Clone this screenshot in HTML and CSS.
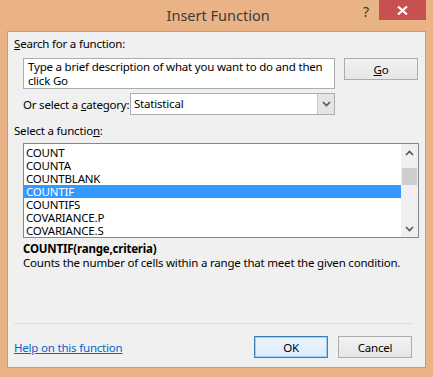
FILE: index.html
```html
<!DOCTYPE html>
<html lang="en">
<head>
    <meta charset="UTF-8">
    <title>Insert Function</title>
    <link rel="stylesheet" href="styles.css">
</head>
<body>
    <div class="janela">
        <div class="titulo">
            <span class="titulo-texto">Insert Function</span>
            <span class="ajuda">?</span>
            <span class="fechar">
                <svg width="11" height="9" viewBox="0 0 11 9"><path d="M1 0.5 L10 8.5 M10 0.5 L1 8.5" stroke="#fff" stroke-width="2.2"/></svg>
            </span>
        </div>

        <div class="cliente">
            <div class="rotulo"><u>S</u>earch for a function:</div>
            <div class="linha-busca">
                <div class="caixa-busca">Type a brief description of what you want to do and then click Go</div>
                <button class="botao"><u>G</u>o</button>
            </div>

            <div class="linha-categoria">
                <span class="rotulo-categoria">Or select a <u>c</u>ategory:</span>
                <div class="combo">
                    <span class="combo-valor">Statistical</span>
                    <span class="combo-seta">
                        <svg width="9" height="6" viewBox="0 0 9 6"><path d="M1 1 L4.5 4.5 L8 1" fill="none" stroke="#555" stroke-width="1.6"/></svg>
                    </span>
                </div>
            </div>

            <div class="rotulo rotulo-lista">Select a functio<u>n</u>:</div>
            <div class="lista">
                <div class="itens">
                    <div class="item">COUNT</div>
                    <div class="item">COUNTA</div>
                    <div class="item">COUNTBLANK</div>
                    <div class="item selecionado">COUNTIF</div>
                    <div class="item">COUNTIFS</div>
                    <div class="item">COVARIANCE.P</div>
                    <div class="item">COVARIANCE.S</div>
                </div>
                <div class="rolagem">
                    <svg width="9" height="6" viewBox="0 0 9 6"><path d="M1 5 L4.5 1.5 L8 5" fill="none" stroke="#555" stroke-width="1.6"/></svg>
                    <div class="trilho"><div class="polegar"></div></div>
                    <svg width="9" height="6" viewBox="0 0 9 6"><path d="M1 1 L4.5 4.5 L8 1" fill="none" stroke="#555" stroke-width="1.6"/></svg>
                </div>
            </div>

            <div class="assinatura">COUNTIF(range,criteria)</div>
            <div class="descricao">Counts the number of cells within a range that meet the given condition.</div>

            <div class="rodape">
                <a class="link-ajuda" href="#">Help on this function</a>
                <div class="botoes">
                    <button class="botao padrao">OK</button>
                    <button class="botao">Cancel</button>
                </div>
            </div>
        </div>
    </div>
</body>
</html>
```

FILE: styles.css
```css
/* Janela */
body {
    margin: 0;
    font-family: 'Noto Sans', 'Open Sans', sans-serif;
    font-size: 11.5px;
    letter-spacing: -0.2px;
    color: #000;
    background-color: #eab385;
}

.janela {
    width: 433px;
    height: 377px;
    background-color: #eab385;
    padding: 0 7px 9px 7px;
    box-sizing: border-box;
    display: flex;
    flex-direction: column;
}

.titulo {
    height: 31px;
    display: flex;
    align-items: flex-start;
}

.titulo-texto {
    flex: 1;
    text-align: center;
    font-size: 14.5px;
    letter-spacing: 0;
    color: #3c3c3c;
    padding-top: 5px;
    padding-left: 66px;
}

.ajuda {
    font-size: 14px;
    color: #333;
    margin-top: 2px;
    margin-right: 10px;
}

.fechar {
    flex: none;
    width: 47px;
    height: 20px;
    background-color: #c75050;
    display: flex;
    align-items: center;
    justify-content: center;
}

.cliente {
    flex: 1;
    background-color: #f0f0f0;
    border: 1px solid #c99a76;
    padding: 3px 6px 0 6px;
    display: flex;
    flex-direction: column;
}

.rotulo {
    height: 17px;
    line-height: 17px;
}

.linha-busca {
    display: flex;
    gap: 9px;
    margin-top: 6px;
    padding-left: 9px;
}

.caixa-busca {
    width: 312px;
    height: 31px;
    border: 1px solid #abadb3;
    background-color: #fff;
    padding: 1px 4px 0 4px;
    line-height: 14px;
    box-sizing: border-box;
    overflow: hidden;
}

.botao {
    width: 74px;
    height: 22px;
    font-family: inherit;
    font-size: 11.5px;
    letter-spacing: -0.2px;
    color: #000;
    background: linear-gradient(#f2f2f2, #e6e6e6);
    border: 1px solid #acacac;
    padding: 0;
}

.botao.padrao {
    border-color: #3c7fb1;
    box-shadow: inset 0 0 0 1px #9cd0f5;
    background: linear-gradient(#ebf4fc, #dcecfc);
}

.linha-categoria {
    display: flex;
    align-items: center;
    margin-top: 4px;
    padding-left: 9px;
}

.rotulo-categoria {
    width: 107px;
}

.combo {
    width: 205px;
    height: 22px;
    border: 1px solid #acacac;
    background-color: #fff;
    box-sizing: border-box;
    display: flex;
}

.combo-valor {
    flex: 1;
    padding-left: 3px;
    line-height: 19px;
}

.combo-seta {
    width: 16px;
    background-color: #e5e5e5;
    border-left: 1px solid #c8c8c8;
    display: flex;
    align-items: center;
    justify-content: center;
}

.rotulo-lista {
    margin-top: 7px;
}

.lista {
    margin: 4px 0 0 9px;
    width: 396px;
    height: 95px;
    border: 1px solid #828790;
    background-color: #fff;
    box-sizing: border-box;
    display: flex;
}

.itens {
    flex: 1;
    padding-top: 2px;
}

.item {
    height: 13px;
    line-height: 13px;
    padding-left: 2px;
}

.item.selecionado {
    background-color: #3399ff;
    color: #fff;
}

.rolagem {
    width: 17px;
    background-color: #f0f0f0;
    display: flex;
    flex-direction: column;
    align-items: center;
    padding: 6px 0 5px 0;
}

.trilho {
    flex: 1;
    width: 15px;
    padding-top: 12px;
}

.polegar {
    width: 15px;
    height: 17px;
    background-color: #cdcdcd;
}

.assinatura {
    font-weight: bold;
    margin: 4px 0 0 9px;
    height: 14px;
    line-height: 14px;
}

.descricao {
    margin-left: 9px;
    height: 14px;
    line-height: 14px;
}

.rodape {
    margin-top: auto;
    border-top: 1px solid #dcdcdc;
    display: flex;
    align-items: center;
    justify-content: space-between;
    padding: 12px 0 9px 0;
    margin-right: 7px;
}

.link-ajuda {
    color: #0066cc;
    text-decoration: underline;
}

.botoes {
    display: flex;
    gap: 10px;
}
```
